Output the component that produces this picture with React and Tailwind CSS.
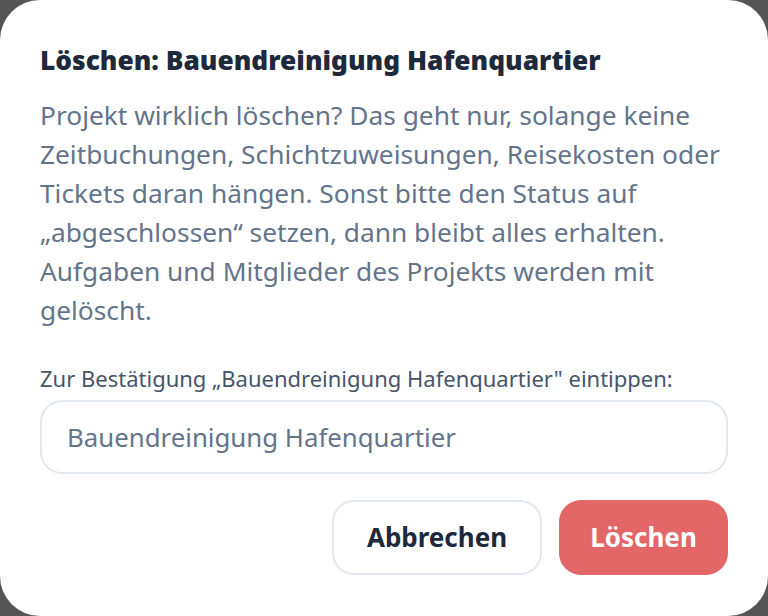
export default function App() {
  const projectName = 'Bauendreinigung Hafenquartier';

  return (
    <div className="h-[616px] w-[768px] bg-[#555555] font-['Noto_Sans',sans-serif]">
      <div className="flex h-full w-full flex-col rounded-[40px] bg-white px-10 pt-[42px]">
        <h2 className="text-[26.3px] font-black leading-[36px] text-[#1e293b]">
          Löschen: {projectName}
        </h2>
        <p className="mt-[18px] text-[26.3px] leading-[39px] text-[#64748b]">
          Projekt wirklich löschen? Das geht nur, solange keine Zeitbuchungen, Schichtzuweisungen, Reisekosten oder
          Tickets daran hängen. Sonst bitte den Status auf „abgeschlossen“ setzen, dann bleibt alles erhalten.
          Aufgaben und Mitglieder des Projekts werden mit gelöscht.
        </p>
        <label className="mt-[33px] block text-[22px] leading-[30px] text-[#475569]">
          Zur Bestätigung „{projectName}" eintippen:
        </label>
        <input
          type="text"
          defaultValue={projectName}
          className="mt-[7px] h-[74px] w-full rounded-[22px] border-2 border-[#e2e8f0] px-[25px] text-[25.8px] text-[#64748b] outline-none"
        />
        <div className="mt-[26px] flex justify-end gap-[17px]">
          <button
            type="button"
            className="h-[75px] w-[210px] rounded-[22px] border-2 border-[#e2e8f0] bg-white text-[26px] font-bold text-[#1e293b]"
          >
            Abbrechen
          </button>
          <button
            type="button"
            className="h-[75px] w-[169px] rounded-[22px] bg-[#e46767] text-[26px] font-bold text-white"
          >
            Löschen
          </button>
        </div>
      </div>
    </div>
  );
}
